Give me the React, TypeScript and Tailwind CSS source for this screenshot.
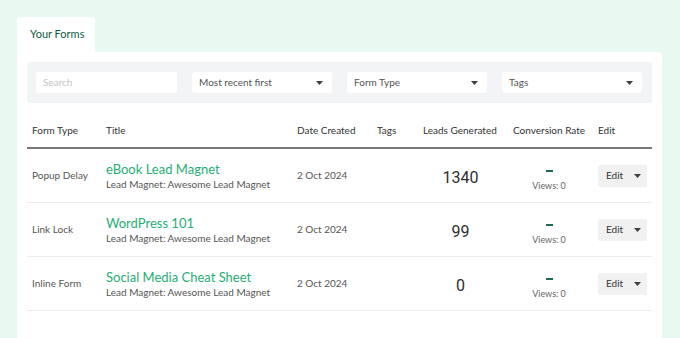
import React from 'react';

const rows = [
  { type: 'Popup Delay', title: 'eBook Lead Magnet', leads: '1340' },
  { type: 'Link Lock', title: 'WordPress 101', leads: '99' },
  { type: 'Inline Form', title: 'Social Media Cheat Sheet', leads: '0' },
];

const cols = 'grid grid-cols-[74px_191px_80px_46px_90px_85px_59px]';

const Caret = () => (
  <svg width="7" height="4" viewBox="0 0 7 4" className="shrink-0">
    <path d="M0 0h7L3.5 4z" fill="#3f3f3f" />
  </svg>
);

const Select = ({ label }: { label: string }) => (
  <div className="w-[140px] h-[21px] bg-white rounded-[3px] flex items-center justify-between pl-[7px] pr-[9px]">
    <span className="text-[10px] text-[#555]">{label}</span>
    <Caret />
  </div>
);

export default function App() {
  return (
    <div
      className="min-h-screen bg-[#e8f9f2] pl-[17px] pt-[17px] pr-[18px]"
      style={{ fontFamily: 'Lato, "Open Sans", sans-serif' }}
    >
      <div className="w-[78px] h-[35px] bg-white rounded-t-[4px] flex items-center pl-[13px]">
        <span className="text-[11px] text-[#0e5a3c]">Your Forms</span>
      </div>
      <div className="bg-white rounded-tr-[4px] px-[10px] pt-[10px] h-[300px]">
        <div className="h-[41px] bg-[#f3f4f6] rounded-[3px] flex items-center gap-[15px] pl-[9px]">
          <div className="w-[141px] h-[21px] bg-white rounded-[2px] flex items-center pl-[7px]">
            <span className="text-[10px] text-[#c4c4c4]">Search</span>
          </div>
          <Select label="Most recent first" />
          <Select label="Form Type" />
          <Select label="Tags" />
        </div>

        <div className={`${cols} mt-[10px] h-[36px] items-center border-b-2 border-[#777] text-[10px] text-[#333]`}>
          <div className="pl-[5px]">Form Type</div>
          <div className="pl-[5px]">Title</div>
          <div className="pl-[5px]">Date Created</div>
          <div className="pl-[5px]">Tags</div>
          <div className="pl-[5px]">Leads Generated</div>
          <div className="pl-[5px]">Conversion Rate</div>
          <div className="pl-[5px]">Edit</div>
        </div>

        {rows.map((r) => (
          <div
            key={r.title}
            className={`${cols} h-[54px] items-center border-b border-[#ececec] text-[10px] text-[#555]`}
          >
            <div className="pl-[5px]">{r.type}</div>
            <div className="pl-[5px] flex flex-col">
              <span className="text-[13px] leading-[16px] text-[#1fae74]">{r.title}</span>
              <span className="leading-[14px] text-[#555]">Lead Magnet: Awesome Lead Magnet</span>
            </div>
            <div className="pl-[5px]">2 Oct 2024</div>
            <div />
            <div
              className="ml-[5px] w-[75px] pt-[4px] text-center text-[16px] font-normal text-[#2e2e2e]"
              style={{ fontFamily: 'Roboto, sans-serif' }}
            >
              {r.leads}
            </div>
            <div className="ml-[5px] w-[72px] pt-[10px] flex flex-col items-center">
              <span className="w-[7px] h-[2px] bg-[#1d6b4c] mb-[8px]" />
              <span className="text-[9px] text-[#666] leading-[11px]">Views: 0</span>
            </div>
            <div className="pl-[5px]">
              <div className="w-[49px] h-[22px] bg-[#f1f1f1] rounded-[2px] flex items-center pl-[8px] pr-[6px] justify-between">
                <span className="text-[10px] text-[#333]">Edit</span>
                <Caret />
              </div>
            </div>
          </div>
        ))}
      </div>
    </div>
  );
}
